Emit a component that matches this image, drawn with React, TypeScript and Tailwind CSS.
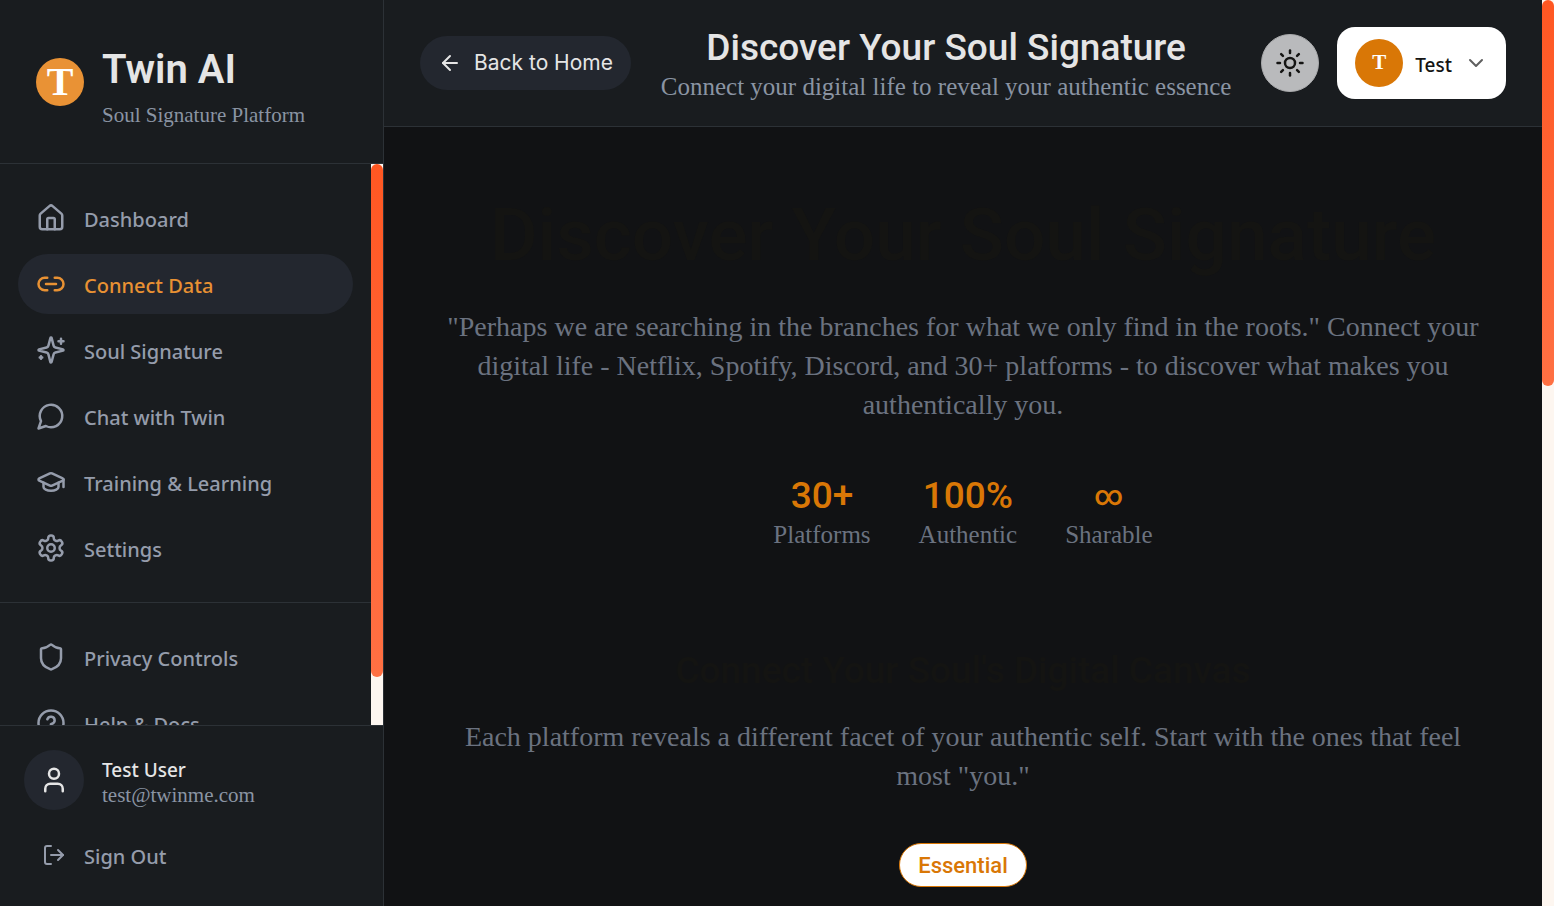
import type { ReactNode } from "react";
import {
  ArrowLeft,
  ChevronDown,
  CircleHelp,
  GraduationCap,
  House,
  Link2,
  LogOut,
  Shield,
  Sun,
  User,
  type LucideIcon,
} from "lucide-react";

type IconProps = { className?: string };
type NavItem = { label: string; icon: LucideIcon | ((props: IconProps) => ReactNode); active?: boolean };

function LineIcon({ className = "", children }: IconProps & { children: ReactNode }) {
  return (
    <svg
      viewBox="0 0 24 24"
      fill="none"
      stroke="currentColor"
      strokeWidth="2"
      strokeLinecap="round"
      strokeLinejoin="round"
      className={className}
      aria-hidden="true"
    >
      {children}
    </svg>
  );
}

function Sparkles({ className }: IconProps) {
  return (
    <LineIcon className={className}>
      <path d="M9.937 15.5A2 2 0 0 0 8.5 14.063l-6.135-1.582a.5.5 0 0 1 0-.962L8.5 9.936A2 2 0 0 0 9.937 8.5l1.582-6.135a.5.5 0 0 1 .963 0L14.063 8.5A2 2 0 0 0 15.5 9.937l6.135 1.581a.5.5 0 0 1 0 .964L15.5 14.063a2 2 0 0 0-1.437 1.437l-1.582 6.135a.5.5 0 0 1-.963 0z" />
      <path d="M20 3v4M22 5h-4M4 17v2M5 18H3" />
    </LineIcon>
  );
}

function ChatBubble({ className }: IconProps) {
  return (
    <LineIcon className={className}>
      <path d="M7.9 20A9 9 0 1 0 4 16.1L2 22Z" />
    </LineIcon>
  );
}

function Gear({ className }: IconProps) {
  return (
    <LineIcon className={className}>
      <path d="M12.22 2h-.44a2 2 0 0 0-2 2v.18a2 2 0 0 1-1 1.73l-.43.25a2 2 0 0 1-2 0l-.15-.08a2 2 0 0 0-2.73.73l-.22.38a2 2 0 0 0 .73 2.73l.15.1a2 2 0 0 1 1 1.72v.51a2 2 0 0 1-1 1.74l-.15.09a2 2 0 0 0-.73 2.73l.22.38a2 2 0 0 0 2.73.73l.15-.08a2 2 0 0 1 2 0l.43.25a2 2 0 0 1 1 1.73V20a2 2 0 0 0 2 2h.44a2 2 0 0 0 2-2v-.18a2 2 0 0 1 1-1.73l.43-.25a2 2 0 0 1 2 0l.15.08a2 2 0 0 0 2.73-.73l.22-.39a2 2 0 0 0-.73-2.73l-.15-.08a2 2 0 0 1-1-1.74v-.5a2 2 0 0 1 1-1.74l.15-.09a2 2 0 0 0 .73-2.73l-.22-.38a2 2 0 0 0-2.73-.73l-.15.08a2 2 0 0 1-2 0l-.43-.25a2 2 0 0 1-1-1.73V4a2 2 0 0 0-2-2z" />
      <circle cx="12" cy="12" r="3" />
    </LineIcon>
  );
}

const primaryNav: NavItem[] = [
  { label: "Dashboard", icon: House },
  { label: "Connect Data", icon: Link2, active: true },
  { label: "Soul Signature", icon: Sparkles },
  { label: "Chat with Twin", icon: ChatBubble },
  { label: "Training & Learning", icon: GraduationCap },
  { label: "Settings", icon: Gear },
];

const secondaryNav: NavItem[] = [
  { label: "Privacy Controls", icon: Shield },
  { label: "Help & Docs", icon: CircleHelp },
];

const stats = [
  { value: "30+", label: "Platforms", size: "text-[37px]" },
  { value: "100%", label: "Authentic", size: "text-[37px]" },
  { value: "∞", label: "Sharable", size: "text-[28px]" },
];

function NavLink({ label, icon: Icon, active }: NavItem) {
  return (
    <a
      href="#"
      aria-current={active ? "page" : undefined}
      className={
        active
          ? "flex h-[60px] shrink-0 items-center gap-[18px] rounded-full bg-[#23272f] px-[18px] text-[#e89133]"
          : "flex h-[60px] shrink-0 items-center gap-[18px] rounded-full px-[18px] text-[#959cab]"
      }
    >
      <Icon className="size-[30px] shrink-0" />
      <span className="pt-1 font-['Noto_Sans',sans-serif] text-xl font-medium">{label}</span>
    </a>
  );
}

function NavGroup({ label, items }: { label: string; items: NavItem[] }) {
  return (
    <nav aria-label={label} className="flex flex-col gap-1.5 px-[18px] py-6">
      {items.map((item) => (
        <NavLink key={item.label} {...item} />
      ))}
    </nav>
  );
}

function ScrollPane({ children, thumb, className = "" }: { children: ReactNode; thumb: string; className?: string }) {
  return (
    <div className={`flex min-h-0 ${className}`}>
      <div className="min-w-0 flex-1 overflow-y-auto [scrollbar-width:none]">{children}</div>
      <div aria-hidden="true" className="w-3 shrink-0 bg-[#fdf6f0]">
        <div className={`rounded-full bg-linear-to-b from-[#ff5722] to-[#ff7043] ${thumb}`} />
      </div>
    </div>
  );
}

function Sidebar() {
  return (
    <aside className="flex w-96 shrink-0 flex-col border-r border-[#2c3136] bg-[#191c1f]">
      <div className="flex items-center gap-[18px] border-b border-[#2c3136] p-9">
        <span className="flex size-12 shrink-0 items-center justify-center rounded-full bg-[#e99235] font-['Liberation_Serif',serif] text-[40px] leading-none font-bold text-white">
          T
        </span>
        <div>
          <p className="font-[Roboto,sans-serif] text-[40px] leading-[67px] font-semibold text-[#e5e5e5]">Twin AI</p>
          <p className="font-['Liberation_Serif',serif] text-[21px] leading-6 text-[#8a94a3]">Soul Signature Platform</p>
        </div>
      </div>
      <ScrollPane thumb="h-[513px]" className="flex-1">
        <NavGroup label="Main" items={primaryNav} />
        <div className="border-t border-[#2c3136]">
          <NavGroup label="Support" items={secondaryNav} />
        </div>
      </ScrollPane>
      <div className="border-t border-[#2c3136] p-6">
        <div className="flex items-center gap-[18px]">
          <span className="flex size-[60px] items-center justify-center rounded-full bg-[#23272f] text-[#e5e5e5]">
            <User className="size-[30px]" />
          </span>
          <div className="pt-1">
            <p className="font-['Noto_Sans',sans-serif] text-[19px] leading-[26px] font-medium text-[#e5e5e5]">Test User</p>
            <p className="font-['Liberation_Serif',serif] text-[21px] leading-6 text-[#8a94a3]">test@twinme.com</p>
          </div>
        </div>
        <button type="button" className="mt-[18px] flex h-[54px] w-full items-center gap-[18px] px-[18px] text-[#959cab]">
          <LogOut className="size-6" />
          <span className="pt-1 font-['Noto_Sans',sans-serif] text-xl font-medium">Sign Out</span>
        </button>
      </div>
    </aside>
  );
}

function Header() {
  return (
    <header className="flex items-center justify-between border-b border-[#2c3136] bg-[#191c1f] px-9 py-6">
      <a href="#" className="flex h-[54px] items-center gap-3 rounded-full bg-[#23272f] px-[18px] text-[#e5e5e5]">
        <ArrowLeft className="size-6" />
        <span className="font-[Inter,sans-serif] text-[21px]">Back to Home</span>
      </a>
      <div className="text-center">
        <h1 className="font-[Roboto,sans-serif] text-[37px] leading-[48px] font-medium text-[#e5e5e5]">
          Discover Your Soul Signature
        </h1>
        <p className="font-['Liberation_Serif',serif] text-[25px] leading-[30px] text-[#8a94a3]">
          Connect your digital life to reveal your authentic essence
        </p>
      </div>
      <div className="flex items-center gap-[18px]">
        <button
          type="button"
          aria-label="Toggle theme"
          className="flex size-[58px] items-center justify-center rounded-full border border-[#a9aaac] bg-[#b9babc] text-[#141413]"
        >
          <Sun className="size-[30px]" />
        </button>
        <button type="button" className="flex h-[72px] items-center gap-3 rounded-[18px] bg-white px-[18px]">
          <span className="flex size-12 items-center justify-center rounded-full bg-[#d97706] font-['Liberation_Serif',serif] text-[21px] font-bold text-white">
            T
          </span>
          <span className="pt-1 font-['Noto_Sans',sans-serif] text-[19px] font-medium text-[#141413]">Test</span>
          <ChevronDown className="size-6 text-[#5f5f5f]" />
        </button>
      </div>
    </header>
  );
}

export default function App() {
  return (
    <div className="flex h-screen bg-[#111214]">
      <Sidebar />
      <ScrollPane thumb="h-[386px]" className="min-w-0 flex-1">
        <Header />
        <main className="flex flex-col items-center px-12 pt-[72px] pb-12 text-center">
          <h2 className="font-[Roboto,sans-serif] text-[73px] leading-[72px] font-medium text-[#141412]">
            Discover Your Soul Signature
          </h2>
          <p className="mt-9 max-w-[1056px] font-['Liberation_Serif',serif] text-[28px] leading-[39px] text-[#6b7280]">
            "Perhaps we are searching in the branches for what we only find in the roots." Connect your digital life -
            Netflix, Spotify, Discord, and 30+ platforms - to discover what makes you authentically you.
          </p>
          <dl className="mt-[51px] flex gap-12">
            {stats.map((stat) => (
              <div key={stat.label} className="flex flex-col-reverse">
                <dt className="font-['Liberation_Serif',serif] text-[25px] leading-9 text-[#6b7280]">{stat.label}</dt>
                <dd className={`font-[Roboto,sans-serif] leading-[42px] font-medium text-[#d97706] ${stat.size}`}>
                  {stat.value}
                </dd>
              </div>
            ))}
          </dl>
          <h3 className="mt-24 font-[Roboto,sans-serif] text-[37px] leading-[44px] font-medium text-[#141412]">
            Connect Your Soul's Digital Canvas
          </h3>
          <p className="mt-6 max-w-[1008px] font-['Liberation_Serif',serif] text-[28px] leading-[39px] text-[#6b7280]">
            Each platform reveals a different facet of your authentic self. Start with the ones that feel most "you."
          </p>
          <span className="mt-12 flex h-11 items-center rounded-full border border-[#d97706] bg-white px-[18px] font-[Roboto,sans-serif] text-[22px] font-medium text-[#d97706]">
            Essential
          </span>
        </main>
      </ScrollPane>
    </div>
  );
}
